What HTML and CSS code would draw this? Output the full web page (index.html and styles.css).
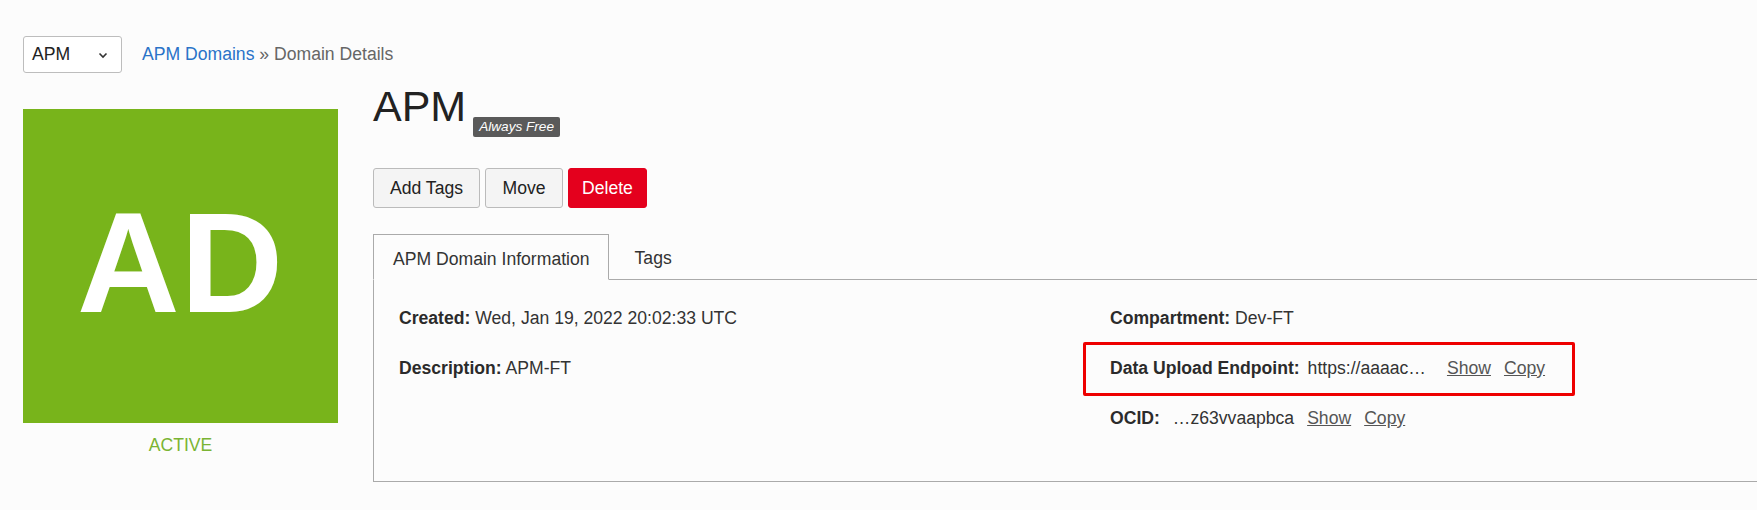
FILE: index.html
```html
<!DOCTYPE html>
<html>
<head>
<meta charset="utf-8">
<link rel="stylesheet" href="styles.css">
</head>
<body>
<div class="page">
  <div class="topbar">
    <div class="select">
      <span>APM</span>
      <svg class="chev" width="10" height="7" viewBox="0 0 10 7"><path d="M1.5 1.5 L5 5 L8.5 1.5" fill="none" stroke="#333" stroke-width="1.6"/></svg>
    </div>
    <div class="crumbs"><a class="crumb-link">APM Domains</a> » Domain Details</div>
  </div>
  <div class="main">
    <div class="side">
      <div class="avatar">AD</div>
      <div class="status">ACTIVE</div>
    </div>
    <div class="content">
      <div class="title-row">
        <h1 class="title">APM</h1>
        <span class="badge">Always Free</span>
      </div>
      <div class="actions">
        <button class="btn">Add Tags</button>
        <button class="btn">Move</button>
        <button class="btn btn-danger">Delete</button>
      </div>
      <div class="tabs">
        <div class="tab tab-active">APM Domain Information</div>
        <div class="tab tab-plain">Tags</div>
        <div class="tab-fill"></div>
      </div>
      <div class="panel">
        <div class="col">
          <div class="row"><b>Created:</b> Wed, Jan 19, 2022 20:02:33 UTC</div>
          <div class="row"><b>Description:</b> APM-FT</div>
        </div>
        <div class="col col-right">
          <div class="row"><b>Compartment:</b> Dev-FT</div>
          <div class="row highlight"><b>Data Upload Endpoint:</b><span class="val">https://aaaac…</span><a class="lnk">Show</a><a class="lnk">Copy</a></div>
          <div class="row"><b>OCID:</b><span class="val ocid">…z63vvaapbca</span><a class="lnk lnk-tight">Show</a><a class="lnk">Copy</a></div>
        </div>
      </div>
    </div>
  </div>
</div>
</body>
</html>
```
FILE: styles.css
```css
html, body {
  margin: 0;
  padding: 0;
  background: #fcfcfc;
  overflow: hidden;
}
body {
  font-family: "Liberation Sans", Arial, sans-serif;
  color: #333;
  font-size: 17.6px;
}
.page {
  padding: 36px 0 0 23px;
}
.topbar {
  display: flex;
  align-items: center;
  height: 37px;
}
.select {
  box-sizing: border-box;
  width: 99px;
  height: 37px;
  border: 1px solid #bdbdbd;
  border-radius: 3px;
  background: #fff;
  display: flex;
  align-items: center;
  justify-content: space-between;
  padding: 0 13px 0 8px;
  font-size: 17.6px;
  color: #222;
}
.chev { margin-top: 2px; }
.crumbs {
  margin-left: 20px;
  color: #666;
  font-size: 17.6px;
}
.crumb-link {
  color: #2a73c8;
}
.main {
  display: flex;
  margin-top: 36px;
}
.side {
  width: 315px;
  flex: none;
  display: flex;
  flex-direction: column;
  align-items: center;
}
.avatar {
  width: 315px;
  height: 314px;
  background: #78b41b;
  color: #fff;
  font-weight: bold;
  font-size: 142px;
  display: flex;
  align-items: center;
  justify-content: center;
  letter-spacing: 1px;
  line-height: 1;
  padding-bottom: 6px;
  box-sizing: border-box;
}
.status {
  margin-top: 12px;
  color: #7ab433;
  font-size: 17.6px;
}
.content {
  margin-left: 35px;
  flex: 1;
  margin-top: -24px;
}
.title-row {
  display: flex;
  align-items: flex-end;
  height: 52px;
}
.title {
  margin: 0 0 9px 0;
  font-weight: normal;
  font-size: 43px;
  line-height: 44px;
  color: #222;
}
.badge {
  background: #5a5a5a;
  color: #fff;
  font-style: italic;
  font-size: 13.6px;
  padding: 2px 6px 2px;
  border-radius: 2px;
  margin-left: 7px;
  margin-bottom: 0;
  line-height: 16px;
}
.actions {
  display: flex;
  gap: 5px;
  margin-top: 31px;
}
.btn {
  font-family: "Liberation Sans", Arial, sans-serif;
  font-size: 17.6px;
  height: 40px;
  min-width: 78px;
  padding: 0 16px;
  border: 1px solid #bbb;
  border-radius: 3px;
  background: #f4f4f4;
  color: #222;
}
.btn-danger {
  background: #e4001d;
  border-color: #e4001d;
  color: #fff;
  padding: 0 13px;
}
.tabs {
  display: flex;
  margin-top: 26px;
  height: 46px;
}
.tab {
  display: flex;
  align-items: center;
  border-bottom: 1px solid #aaa;
  font-size: 17.6px;
  color: #333;
  padding-top: 4px;
}
.tab-active {
  border: 1px solid #aaa;
  border-bottom: 1px solid #fcfcfc;
  padding: 4px 18px 0 19px;
}
.tab-plain {
  padding: 4px 0 0 26px;
  width: 44px;
}
.tab-fill {
  flex: 1;
  border-bottom: 1px solid #aaa;
}
.panel {
  border: 1px solid #aaa;
  border-top: none;
  border-right: none;
  height: 202px;
  display: grid;
  grid-template-columns: 711px 1fr;
  padding: 13px 0 0 25px;
  box-sizing: border-box;
}
.col {
  display: flex;
  flex-direction: column;
}
.row {
  height: 50px;
  display: flex;
  align-items: center;
  white-space: pre;
  color: #333;
}
.row b { color: #2b2b2b; }
.highlight {
  position: relative;
}
.highlight::before {
  content: "";
  position: absolute;
  left: -27px;
  top: -1px;
  width: 492px;
  height: 54px;
  box-sizing: border-box;
  border: 3px solid #ee0000;
  border-radius: 2px;
}
.val { margin-left: 8px; }
.ocid { margin-left: 13px; }
.lnk {
  text-decoration: underline;
  color: #555;
  margin-left: 13px;
}
.highlight .lnk:first-of-type { margin-left: 21px; }
```
